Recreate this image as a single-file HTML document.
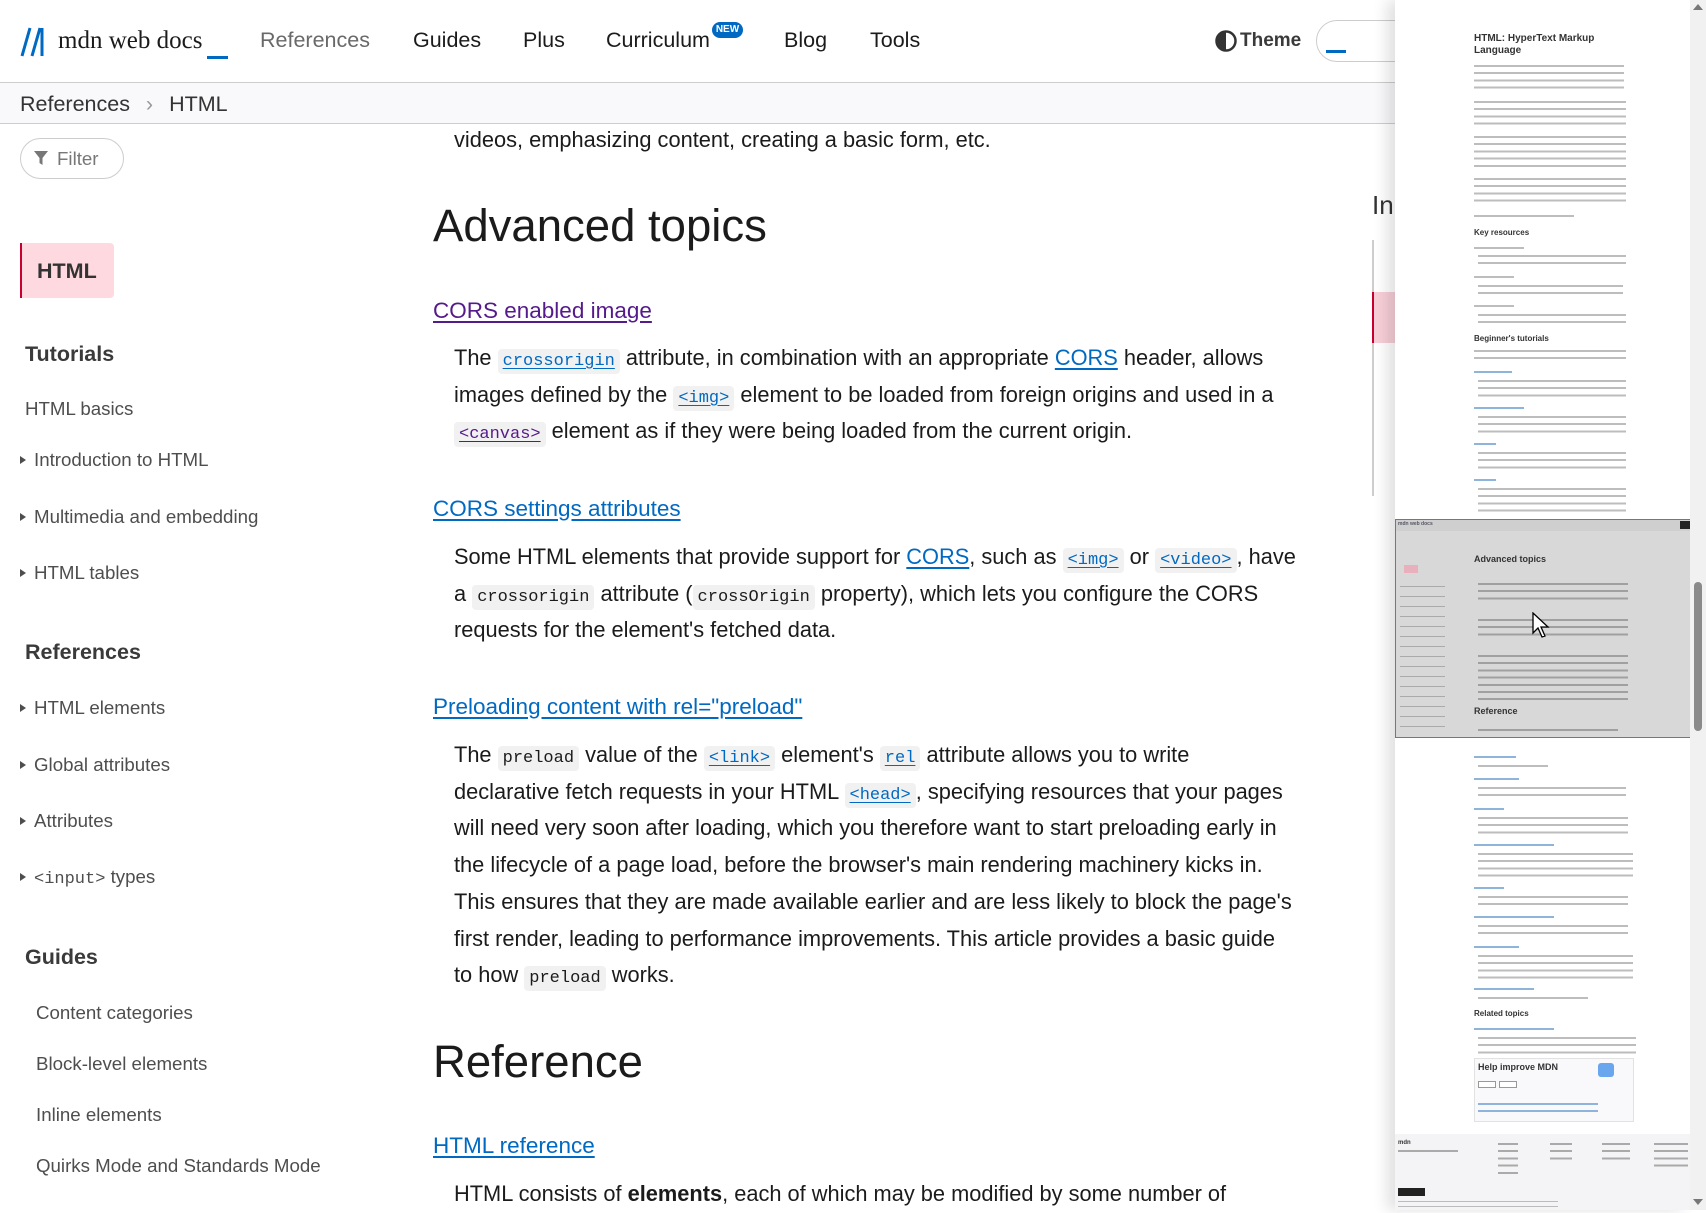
<!DOCTYPE html>
<html><head><meta charset="utf-8">
<style>
*{margin:0;padding:0;box-sizing:border-box}
body{width:1706px;height:1210px;overflow:hidden;background:#fff;font-family:"Liberation Sans",Arial,sans-serif;color:#1b1b1b;position:relative}
.a{position:absolute;white-space:nowrap}
.nav{font-size:21.5px;color:#1b1b1b;top:28px}
.sb{font-size:18.7px;color:#4e4e4e;left:25px}
.sb.t::before{content:"";display:inline-block;border-left:6px solid #4e4e4e;border-top:4px solid transparent;border-bottom:4px solid transparent;margin-right:8px;vertical-align:2px}
.sbh{font-size:21.5px;font-weight:bold;color:#3a3a3a;left:25px}
.p{left:454px;font-size:21.8px;line-height:36.7px;color:#1b1b1b}
.lk{color:#0069c2;text-decoration:underline;text-underline-offset:3px}
.h3{left:433px;font-size:22.5px}
.h2{left:433px;font-size:45.5px;color:#1b1b1b}
code{font-family:"Liberation Mono",monospace;font-size:17px;line-height:1;background:#f2f1f1;border-radius:4px;padding:3px 5px;color:#1b1b1b}
code.l{color:#0069c2;text-decoration:underline;text-underline-offset:3px}
code.v{color:#551a8b;text-decoration:underline;text-underline-offset:3px}
.ln{position:absolute;background:repeating-linear-gradient(#fff 0 3px,#bdbdbd 3px 5px,#fff 5px 7.2px)}
.mh{position:absolute;font-size:8px;font-weight:bold;color:#333;white-space:nowrap}
.ml{position:absolute;height:2px;background:#8fb4dc}
</style></head><body>

<!-- header -->
<svg class="a" style="left:20px;top:27px" width="34" height="30" viewBox="0 0 34 30"><path d="M2 29 L10 1 M12 29 L20 1 M22 1 V29" stroke="#0069c2" stroke-width="3" fill="none"/></svg>
<div class="a" style="left:58px;top:27px;font-family:'Liberation Serif',serif;font-size:25px;color:#1b1b1b">mdn web docs</div>
<div class="a" style="left:207px;top:56px;width:21px;height:3px;background:#0069c2"></div>
<div class="a nav" style="left:260px;color:#696969">References</div>
<div class="a nav" style="left:413px">Guides</div>
<div class="a nav" style="left:523px">Plus</div>
<div class="a nav" style="left:606px">Curriculum</div>
<div class="a" style="left:712px;top:22px;width:31px;height:16px;border-radius:8px;background:#0069c2;color:#fff;font-size:10px;font-weight:bold;text-align:center;line-height:16px">NEW</div>
<div class="a nav" style="left:784px">Blog</div>
<div class="a nav" style="left:870px">Tools</div>
<svg class="a" style="left:1215px;top:30px" width="22" height="22" viewBox="0 0 22 22"><circle cx="11" cy="11" r="9.5" fill="none" stroke="#333" stroke-width="2.5"/><path d="M11 1.5 A9.5 9.5 0 0 0 11 20.5Z" fill="#333"/></svg>
<div class="a" style="left:1240px;top:30px;font-size:19px;font-weight:bold;color:#3a3a3a">Theme</div>
<div class="a" style="left:1316px;top:20px;width:120px;height:42px;border:1px solid #cdcdcd;border-radius:21px"></div>
<div class="a" style="left:1326px;top:50px;width:20px;height:3px;background:#0069c2"></div>
<div class="a" style="left:0;top:82px;width:1400px;height:1px;background:#cdcdcd"></div>
<div class="a" style="left:0;top:83px;width:1400px;height:41px;background:#f9f9fb;border-bottom:1px solid #cdcdcd"></div>
<div class="a" style="left:20px;top:92px;font-size:21.5px;color:#333">References <span style="color:#999;margin:0 10px">›</span> HTML</div>

<!-- sidebar -->
<div class="a" style="left:20px;top:138px;width:104px;height:41px;border:1px solid #cdcdcd;border-radius:21px"></div>
<svg class="a" style="left:34px;top:151px" width="14" height="14" viewBox="0 0 14 14"><path d="M0 0H14L8.5 7V14L5.5 12V7Z" fill="#777"/></svg>
<div class="a" style="left:57px;top:148px;font-size:18.7px;color:#777">Filter</div>
<div class="a" style="left:20px;top:243px;width:94px;height:55px;background:#ffd9e0;border-left:2px solid #c7002f;border-radius:0 4px 4px 0"></div>
<div class="a" style="left:37px;top:259px;font-size:21.5px;font-weight:bold;color:#333">HTML</div>
<div class="a sbh" style="top:342px">Tutorials</div>
<div class="a sb" style="top:398px">HTML basics</div>
<div class="a sb t" style="left:20px;top:449px">Introduction to HTML</div>
<div class="a sb t" style="left:20px;top:506px">Multimedia and embedding</div>
<div class="a sb t" style="left:20px;top:562px">HTML tables</div>
<div class="a sbh" style="top:640px">References</div>
<div class="a sb t" style="left:20px;top:697px">HTML elements</div>
<div class="a sb t" style="left:20px;top:754px">Global attributes</div>
<div class="a sb t" style="left:20px;top:810px">Attributes</div>
<div class="a sb t" style="left:20px;top:866px"><span style="font-family:'Liberation Mono',monospace;font-size:17px">&lt;input&gt;</span> types</div>
<div class="a sbh" style="top:945px">Guides</div>
<div class="a sb" style="left:36px;top:1002px">Content categories</div>
<div class="a sb" style="left:36px;top:1053px">Block-level elements</div>
<div class="a sb" style="left:36px;top:1104px">Inline elements</div>
<div class="a sb" style="left:36px;top:1155px">Quirks Mode and Standards Mode</div>

<!-- main -->
<div class="a p" style="top:122px">videos, emphasizing content, creating a basic form, etc.</div>
<div class="a h2" style="top:200px">Advanced topics</div>
<div class="a h3" style="top:298px"><span class="lk" style="color:#551a8b">CORS enabled image</span></div>
<div class="a p" style="top:340px">The <code class="l">crossorigin</code> attribute, in combination with an appropriate <span class="lk">CORS</span> header, allows<br>images defined by the <code class="l">&lt;img&gt;</code> element to be loaded from foreign origins and used in a<br><code class="v">&lt;canvas&gt;</code> element as if they were being loaded from the current origin.</div>
<div class="a h3" style="top:496px"><span class="lk">CORS settings attributes</span></div>
<div class="a p" style="top:539px">Some HTML elements that provide support for <span class="lk">CORS</span>, such as <code class="l">&lt;img&gt;</code> or <code class="l">&lt;video&gt;</code>, have<br>a <code>crossorigin</code> attribute (<code>crossOrigin</code> property), which lets you configure the CORS<br>requests for the element's fetched data.</div>
<div class="a h3" style="top:694px"><span class="lk">Preloading content with rel="preload"</span></div>
<div class="a p" style="top:737px">The <code>preload</code> value of the <code class="l">&lt;link&gt;</code> element's <code class="l">rel</code> attribute allows you to write<br>declarative fetch requests in your HTML <code class="l">&lt;head&gt;</code>, specifying resources that your pages<br>will need very soon after loading, which you therefore want to start preloading early in<br>the lifecycle of a page load, before the browser's main rendering machinery kicks in.<br>This ensures that they are made available earlier and are less likely to block the page's<br>first render, leading to performance improvements. This article provides a basic guide<br>to how <code>preload</code> works.</div>
<div class="a h2" style="top:1036px">Reference</div>
<div class="a h3" style="top:1133px"><span class="lk">HTML reference</span></div>
<div class="a p" style="top:1176px">HTML consists of <b>elements</b>, each of which may be modified by some number of</div>

<!-- toc -->
<div class="a" style="left:1372px;top:190px;font-size:26px;color:#333">In</div>
<div class="a" style="left:1372px;top:240px;width:2px;height:256px;background:#cdcdcd"></div>
<div class="a" style="left:1372px;top:292px;width:30px;height:51px;background:#f8cfd8;border-left:2px solid #c7002f"></div>

<!-- minimap panel -->
<div class="a" style="left:1395px;top:0;width:295px;height:1210px;background:#fff;box-shadow:-8px 0 14px rgba(0,0,0,.12)"></div>
<div class="mh" style="left:1474px;top:33px;font-size:10px;line-height:12px">HTML: HyperText Markup<br>Language</div>
<div class="ln" style="left:1474px;top:62px;width:150px;height:29px"></div>
<div class="ln" style="left:1474px;top:98px;width:152px;height:29px"></div>
<div class="ln" style="left:1474px;top:133px;width:152px;height:36px"></div>
<div class="ln" style="left:1474px;top:175px;width:152px;height:29px"></div>
<div class="ln" style="left:1474px;top:212px;width:100px;height:7px"></div>
<div class="mh" style="left:1474px;top:228px">Key resources</div>
<div class="ln" style="left:1474px;top:244px;width:50px;height:7px"></div>
<div class="ln" style="left:1478px;top:252px;width:148px;height:14px"></div>
<div class="ln" style="left:1474px;top:273px;width:40px;height:7px"></div>
<div class="ln" style="left:1478px;top:282px;width:145px;height:14px"></div>
<div class="ln" style="left:1474px;top:302px;width:40px;height:7px"></div>
<div class="ln" style="left:1478px;top:311px;width:148px;height:14px"></div>
<div class="mh" style="left:1474px;top:334px">Beginner's tutorials</div>
<div class="ln" style="left:1474px;top:347px;width:152px;height:14px"></div>
<div class="ml" style="left:1474px;top:371px;width:38px"></div>
<div class="ln" style="left:1478px;top:377px;width:148px;height:21px"></div>
<div class="ml" style="left:1474px;top:407px;width:50px"></div>
<div class="ln" style="left:1478px;top:413px;width:148px;height:21px"></div>
<div class="ml" style="left:1474px;top:443px;width:22px"></div>
<div class="ln" style="left:1478px;top:449px;width:148px;height:21px"></div>
<div class="ml" style="left:1474px;top:479px;width:22px"></div>
<div class="ln" style="left:1478px;top:485px;width:148px;height:28px"></div>
<!-- viewport overlay -->
<div class="a" style="left:1395px;top:519px;width:297px;height:219px;background:#d8d8d8;border:1px solid #777"></div>
<div class="a" style="left:1396px;top:520px;width:295px;height:11px;background:#cfcfcf"></div>
<div class="mh" style="left:1398px;top:521px;font-size:5px;color:#556">mdn web docs</div>
<div class="a" style="left:1680px;top:521px;width:12px;height:8px;background:#222"></div>
<div class="mh" style="left:1474px;top:554px;font-size:9px;color:#333">Advanced topics</div>
<div class="ln" style="left:1478px;top:580px;width:150px;height:22px;background:repeating-linear-gradient(#d8d8d8 0 3px,#a0a0a0 3px 5px,#d8d8d8 5px 7.2px)"></div>
<div class="ln" style="left:1478px;top:616px;width:150px;height:22px;background:repeating-linear-gradient(#d8d8d8 0 3px,#a0a0a0 3px 5px,#d8d8d8 5px 7.2px)"></div>
<div class="ln" style="left:1478px;top:652px;width:150px;height:50px;background:repeating-linear-gradient(#d8d8d8 0 3px,#a0a0a0 3px 5px,#d8d8d8 5px 7.2px)"></div>
<div class="mh" style="left:1474px;top:706px;font-size:9px;color:#333">Reference</div>
<div class="ln" style="left:1478px;top:726px;width:140px;height:10px;background:repeating-linear-gradient(#d8d8d8 0 3px,#a0a0a0 3px 5px,#d8d8d8 5px 7.2px)"></div>
<div class="a" style="left:1404px;top:565px;width:14px;height:8px;background:#e8b0bc"></div>
<div class="ln" style="left:1400px;top:580px;width:45px;height:150px;background:repeating-linear-gradient(#d8d8d8 0 6px,#aaa 6px 7px,#d8d8d8 7px 10px)"></div>
<svg class="a" style="left:1532px;top:612px" width="18" height="26" viewBox="0 0 18 26"><path d="M1 1V21L6 16L10 25L13 24L9 15H16Z" fill="#fff" stroke="#000" stroke-width="1.3"/></svg>
<!-- below -->
<div class="ml" style="left:1474px;top:756px;width:42px"></div>
<div class="ln" style="left:1478px;top:762px;width:70px;height:7px"></div>
<div class="ml" style="left:1474px;top:778px;width:45px"></div>
<div class="ln" style="left:1478px;top:784px;width:148px;height:14px"></div>
<div class="ml" style="left:1474px;top:808px;width:30px"></div>
<div class="ln" style="left:1478px;top:814px;width:150px;height:21px"></div>
<div class="ml" style="left:1474px;top:844px;width:80px"></div>
<div class="ln" style="left:1478px;top:850px;width:155px;height:28px"></div>
<div class="ml" style="left:1474px;top:887px;width:30px"></div>
<div class="ln" style="left:1478px;top:893px;width:150px;height:14px"></div>
<div class="ml" style="left:1474px;top:916px;width:80px"></div>
<div class="ln" style="left:1478px;top:922px;width:150px;height:14px"></div>
<div class="ml" style="left:1474px;top:946px;width:45px"></div>
<div class="ln" style="left:1478px;top:952px;width:155px;height:28px"></div>
<div class="ml" style="left:1474px;top:988px;width:60px"></div>
<div class="ln" style="left:1478px;top:994px;width:110px;height:7px"></div>
<div class="mh" style="left:1474px;top:1009px">Related topics</div>
<div class="ml" style="left:1474px;top:1028px;width:80px"></div>
<div class="ln" style="left:1478px;top:1034px;width:158px;height:21px"></div>
<div class="a" style="left:1474px;top:1058px;width:160px;height:64px;background:#f9f9fb;border:1px solid #e2e2e2"></div>
<div class="mh" style="left:1478px;top:1062px;font-size:9px">Help improve MDN</div>
<div class="a" style="left:1478px;top:1081px;width:18px;height:7px;border:1px solid #999;background:#fff"></div>
<div class="a" style="left:1499px;top:1081px;width:18px;height:7px;border:1px solid #999;background:#fff"></div>
<div class="a" style="left:1598px;top:1063px;width:16px;height:14px;background:#6aa6ee;border-radius:3px"></div>
<div class="ln" style="left:1478px;top:1100px;width:120px;height:14px;background:repeating-linear-gradient(#f9f9fb 0 3px,#8fb4dc 3px 5px,#f9f9fb 5px 7.2px)"></div>
<div class="a" style="left:1395px;top:1134px;width:295px;height:76px;background:#f4f4f6"></div>
<div class="mh" style="left:1398px;top:1140px;font-size:6px">mdn</div>
<div class="ln" style="left:1398px;top:1147px;width:60px;height:7px;background:repeating-linear-gradient(#f4f4f6 0 3px,#aaa 3px 5px,#f4f4f6 5px 7.2px)"></div>
<div class="ln" style="left:1498px;top:1140px;width:20px;height:36px;background:repeating-linear-gradient(#f4f4f6 0 3px,#aaa 3px 5px,#f4f4f6 5px 7.2px)"></div>
<div class="ln" style="left:1550px;top:1140px;width:22px;height:22px;background:repeating-linear-gradient(#f4f4f6 0 3px,#aaa 3px 5px,#f4f4f6 5px 7.2px)"></div>
<div class="ln" style="left:1602px;top:1140px;width:28px;height:22px;background:repeating-linear-gradient(#f4f4f6 0 3px,#aaa 3px 5px,#f4f4f6 5px 7.2px)"></div>
<div class="ln" style="left:1654px;top:1140px;width:34px;height:29px;background:repeating-linear-gradient(#f4f4f6 0 3px,#aaa 3px 5px,#f4f4f6 5px 7.2px)"></div>
<div class="a" style="left:1398px;top:1188px;width:27px;height:8px;background:#222"></div>
<div class="ln" style="left:1398px;top:1198px;width:160px;height:10px;background:repeating-linear-gradient(#f4f4f6 0 3px,#bbb 3px 4px,#f4f4f6 4px 5px)"></div>

<!-- scrollbar -->
<div class="a" style="left:1690px;top:0;width:16px;height:1210px;background:#f1f1f1"></div>
<div class="a" style="left:1694px;top:582px;width:8px;height:149px;background:#8a8a8a;border-radius:4px"></div>
<div class="a" style="left:1693px;top:4px;border-left:5px solid transparent;border-right:5px solid transparent;border-bottom:6px solid #777"></div>
<div class="a" style="left:1693px;top:1199px;border-left:5px solid transparent;border-right:5px solid transparent;border-top:6px solid #777"></div>
</body></html>
